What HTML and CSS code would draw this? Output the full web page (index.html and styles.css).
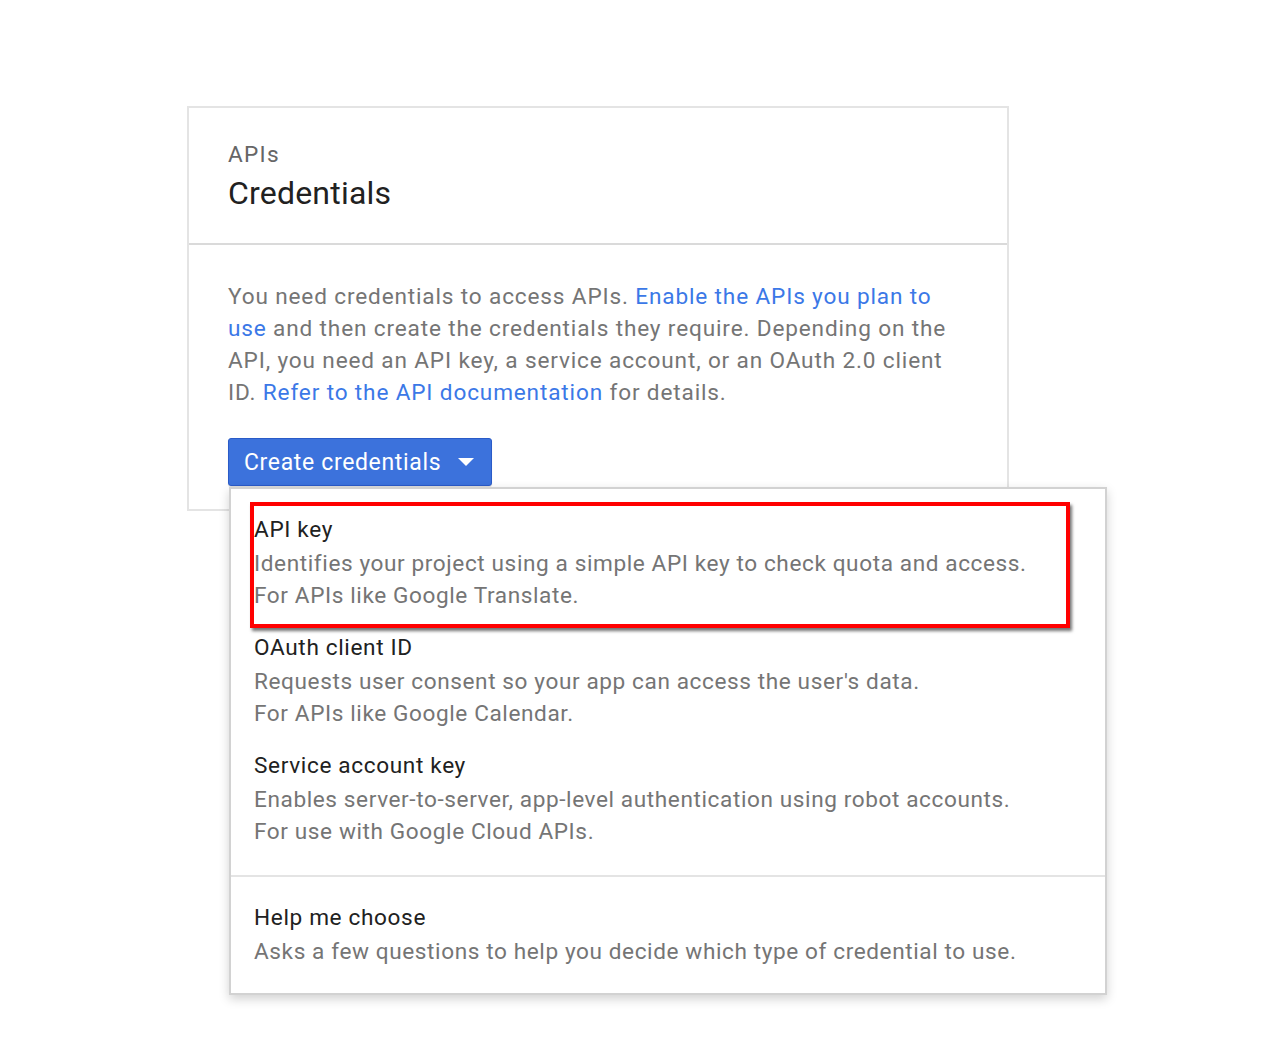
FILE: index.html
```html
<!DOCTYPE html>
<html lang="en">
<head>
<meta charset="utf-8">
<title>Credentials</title>
<link rel="stylesheet" href="styles.css">
</head>
<body>
<div class="page">
  <section class="card">
    <header class="card-head">
      <div class="eyebrow">APIs</div>
      <h1 class="title">Credentials</h1>
    </header>
    <div class="card-body">
      <p class="intro">You need credentials to access APIs. <a href="#">Enable the APIs you plan to use</a> and then create the credentials they require. Depending on the API, you need an API key, a service account, or an OAuth 2.0 client ID. <a href="#">Refer to the API documentation</a> for details.</p>
      <div class="menu-anchor">
        <button class="btn" type="button">Create credentials <span class="caret"></span></button>
        <div class="menu">
          <div class="menu-section">
            <div class="item">
              <div class="item-title">API key</div>
              <div class="item-desc">Identifies your project using a simple API key to check quota and access.<br>For APIs like Google Translate.</div>
              <div class="highlight"></div>
            </div>
            <div class="item">
              <div class="item-title">OAuth client ID</div>
              <div class="item-desc">Requests user consent so your app can access the user's data.<br>For APIs like Google Calendar.</div>
            </div>
            <div class="item">
              <div class="item-title">Service account key</div>
              <div class="item-desc">Enables server-to-server, app-level authentication using robot accounts.<br>For use with Google Cloud APIs.</div>
            </div>
          </div>
          <div class="menu-section sep">
            <div class="item">
              <div class="item-title">Help me choose</div>
              <div class="item-desc">Asks a few questions to help you decide which type of credential to use.</div>
            </div>
          </div>
        </div>
      </div>
    </div>
  </section>
</div>
</body>
</html>
```
FILE: styles.css
```css
* { box-sizing: border-box; }
html, body { margin: 0; padding: 0; background: #fff; }
body { font-family: Roboto, "Liberation Sans", Arial, sans-serif; color: #212121; }

.page { padding: 106px 0 0 187px; min-height: 1054px; }

.card {
  width: 822px;
  border: 2px solid #e4e4e4;
  background: #fff;
}
.card-head {
  padding: 33px 0 30px 39px;
  border-bottom: 2px solid #dadada;
}
.eyebrow { font-size: 22.6px; line-height: 28px; color: #666; letter-spacing: 1.3px; }
.title { margin: 4px 0 0; font-size: 32px; line-height: 40px; font-weight: 400; color: #212121; letter-spacing: 0.2px; }

.card-body { padding: 36px 40px 23px 39px; }
.intro {
  margin: 0;
  font-size: 22.6px;
  line-height: 32px;
  color: #757575;
  letter-spacing: 0.85px;
  width: 730px;
}
.intro a { color: #3b78e7; text-decoration: none; }

.menu-anchor { position: relative; margin-top: 29px; }
.btn {
  display: inline-flex;
  align-items: center;
  height: 48px;
  width: 264px;
  padding: 0 0 0 15px;
  background: #3c72dc;
  border: 1px solid #2a5bc8;
  border-radius: 3px;
  color: #fff;
  font-family: inherit;
  font-size: 23px;
  letter-spacing: 0.65px;
  box-shadow: 0 1px 1px rgba(0,0,0,0.15);
}
.caret {
  margin-left: 17px;
  width: 0; height: 0;
  border-left: 8px solid transparent;
  border-right: 8px solid transparent;
  border-top: 8px solid #fff;
}

.menu {
  position: absolute;
  left: 1px;
  top: 49px;
  width: 878px;
  background: #fff;
  border: 2px solid #d2d2d2;
  box-shadow: 0 4px 10px rgba(0,0,0,0.18);
  z-index: 2;
}
.menu-section {
  padding: 23px 20px 27px 23px;
  display: flex;
  flex-direction: column;
  gap: 18px;
}
.menu-section.sep { border-top: 2px solid #e4e4e4; padding-top: 23px; padding-bottom: 25px; }
.item { position: relative; }
.item-title { font-size: 22.6px; line-height: 36px; color: #212121; letter-spacing: 0.65px; }
.item-desc { font-size: 22.6px; line-height: 32px; color: #757575; letter-spacing: 0.6px; }

.highlight {
  position: absolute;
  left: -4px;
  top: -10px;
  width: 820px;
  height: 126px;
  border: 4px solid #ff0000;
  box-shadow: 2px 3px 3px rgba(0,0,0,0.55);
  pointer-events: none;
}
```
